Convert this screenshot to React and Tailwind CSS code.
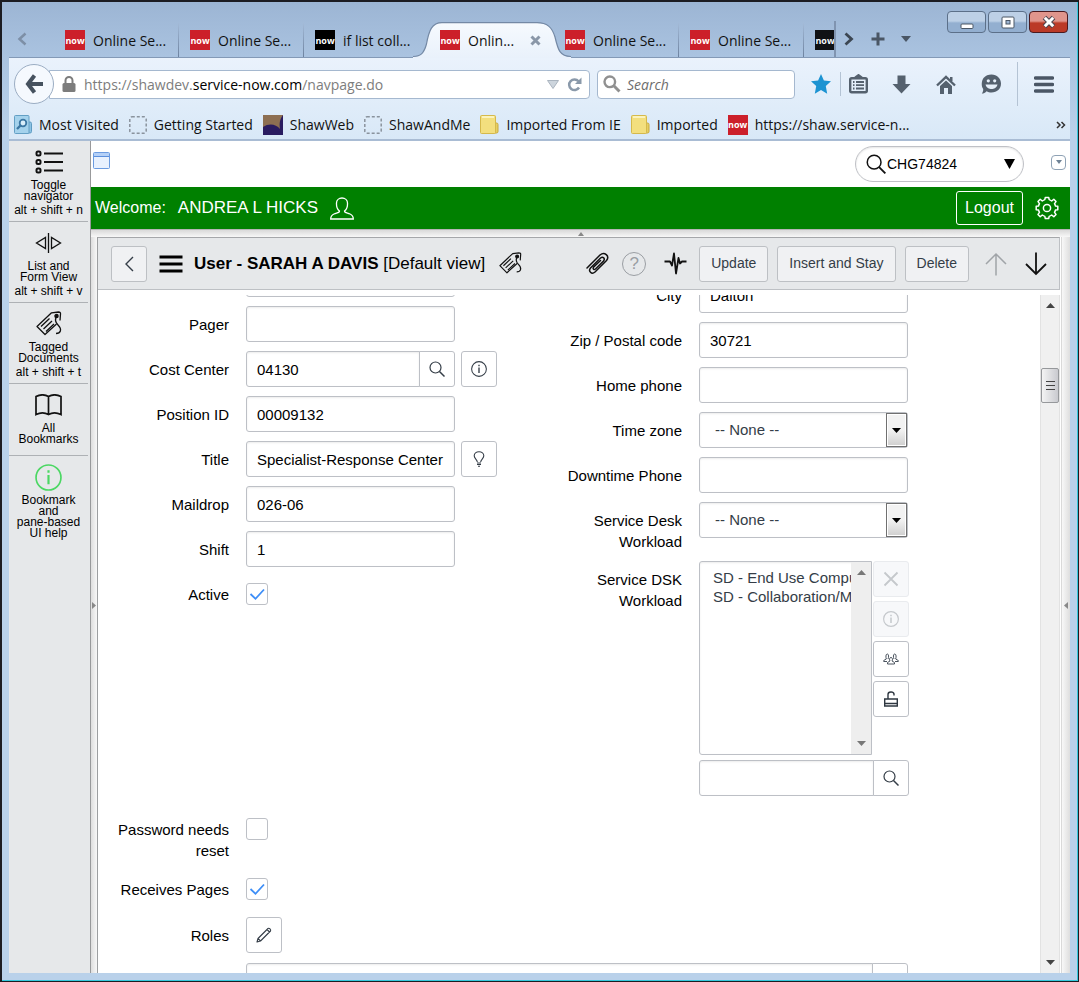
import React from "react";

const ui = "font-['Open_Sans','Noto_Sans',sans-serif]";

function NowIcon({ dark, faded }) {
  return (
    <span
      className={
        "flex h-5 w-5 shrink-0 items-center justify-center overflow-hidden text-[9px] leading-none font-bold text-white " +
        (dark ? "bg-black" : "bg-[#cc1f2a]") +
        (faded ? " opacity-90" : "")
      }
    >
      now
    </span>
  );
}

function Tab({ title, dark, active, line }) {
  if (active) {
    return (
      <div className="relative z-10 flex h-9 w-[125px] shrink-0 items-center pt-0.5 pl-[11px]">
        <svg className="absolute -left-4 top-px h-9 w-[158px]" viewBox="0 0 158 36" aria-hidden="true">
          <defs>
            <linearGradient id="tabfill" x1="0" y1="0" x2="0" y2="1">
              <stop offset="0" stopColor="#f6fafe" />
              <stop offset="1" stopColor="#e9f1fb" />
            </linearGradient>
          </defs>
          <path d="M0 35 C8 35 11 31 13.500 22 C16 8 19 1 29 1 H124 C134 1 139 5 142 15 C145 28 147 35 158 35 V36 H0 Z" fill="url(#tabfill)" />
          <path d="M0 34.500 C8 34.500 11 31 13.500 22 C16 8 19 .7 29 .7 H124 C134 .7 139 5 142 15 C145 28 147 34.500 158 34.500" fill="none" stroke="#7489a5" strokeWidth="1.200" />
        </svg>
        <span className="relative"><NowIcon /></span>
        <a href="#tab" className="relative ml-2 w-[60px] text-[#111]">{title}</a>
        <button aria-label="Close tab" className="relative ml-0.5">
          <svg width="11" height="11" viewBox="0 0 11 11" aria-hidden="true">
            <path d="M1.500 1.500 L9.500 9.500 M9.500 1.500 L1.500 9.500" stroke="#8a97a8" strokeWidth="3" />
          </svg>
        </button>
      </div>
    );
  }
  return (
    <div className="flex h-9 w-[125px] shrink-0 items-center pt-0.5 pl-[11px]">
      <NowIcon dark={dark} />
      <a href="#tab" className="ml-2 flex-1 whitespace-nowrap text-[#111]">{title}</a>
      {line && <span className="h-[34px] w-px bg-gradient-to-b from-[#a3bad7] to-[#6d829f]" />}
    </div>
  );
}

function TitleBar() {
  return (
    <div className="relative flex h-[56px] items-end border-b border-[#8399b6]">
      <div className="flex min-w-0 flex-1 items-center">
        <button aria-label="Scroll tabs left" className="flex h-9 w-[45px] shrink-0 items-center pl-2">
          <svg width="10" height="14" viewBox="0 0 10 14" aria-hidden="true">
            <path d="M8.500 1.500 L2.500 7 L8.500 12.500" fill="none" stroke="#7d8fa6" strokeWidth="2.500" />
          </svg>
        </button>
        <Tab title="Online Se..." line />
        <Tab title="Online Se..." line />
        <Tab title="if list coll..." dark />
        <Tab title="Onlin..." active />
        <Tab title="Online Se..." line />
        <Tab title="Online Se..." line />
        <div className="flex h-9 w-8 shrink-0 items-center overflow-hidden border-r-2 border-[#8094b0] pt-0.5 pl-[11px]">
          <NowIcon dark faded />
        </div>
        <button aria-label="Scroll tabs right" className="ml-2">
          <svg width="10" height="14" viewBox="0 0 10 14" aria-hidden="true">
            <path d="M1.500 1.500 L7.500 7 L1.500 12.500" fill="none" stroke="#3c4652" strokeWidth="2.800" />
          </svg>
        </button>
        <button aria-label="New tab" className="ml-[17px]">
          <svg width="14" height="14" viewBox="0 0 14 14" aria-hidden="true">
            <path d="M7 0.500 V13.500 M0.500 7 H13.500" stroke="#4a5665" strokeWidth="3" />
          </svg>
        </button>
        <button aria-label="List all tabs" className="ml-4">
          <svg width="10" height="6" viewBox="0 0 10 6" aria-hidden="true">
            <path d="M0 0 H10 L5 6 Z" fill="#4a5665" />
          </svg>
        </button>
      </div>
      <div className="absolute right-0.5 top-[9px] flex gap-0.5">
        <button aria-label="Minimize" className="flex h-[22px] w-[39px] items-center justify-center rounded-sm border border-[#5c7089] bg-gradient-to-b from-[#bdd0e6] from-45% to-[#93afd0] to-55%">
          <svg width="14" height="16" viewBox="0 0 14 16" aria-hidden="true">
            <rect x="1" y="10" width="12" height="4.500" rx="1" fill="#fff" stroke="#4a5665" />
          </svg>
        </button>
        <button aria-label="Maximize" className="flex h-[22px] w-[39px] items-center justify-center rounded-sm border border-[#5c7089] bg-gradient-to-b from-[#bdd0e6] from-45% to-[#93afd0] to-55%">
          <svg width="14" height="13" viewBox="0 0 14 13" aria-hidden="true">
            <rect x="1" y="1" width="12" height="11" rx="1" fill="#fff" stroke="#4a5665" />
            <rect x="5" y="4.500" width="4" height="3.500" fill="#9db5d3" stroke="#4a5665" />
          </svg>
        </button>
        <button aria-label="Close" className="flex h-[22px] w-[39px] items-center justify-center rounded-sm border border-[#4a1a1f] bg-gradient-to-b from-[#e0958c] from-45% to-[#bb3a27] to-55%">
          <svg width="14" height="14" viewBox="0 0 14 14" aria-hidden="true">
            <path d="M2.500 2.500 L11.500 11.500 M11.500 2.500 L2.500 11.500" stroke="#4a4550" strokeWidth="5" />
            <path d="M2.800 2.800 L11.200 11.200 M11.200 2.800 L2.800 11.200" stroke="#fff" strokeWidth="3" />
          </svg>
        </button>
      </div>
    </div>
  );
}

function Toolbar() {
  return (
    <div className="flex h-[52px] items-center pl-[5px]">
      <button aria-label="Back" className="z-10 flex h-10 w-10 shrink-0 items-center justify-center rounded-full border border-[#9badc3] bg-[#f5f9fe]">
        <svg width="19" height="20" viewBox="0 0 19 20" aria-hidden="true">
          <path d="M9.500 1.500 L3 10 L9.500 18.500 M2.500 10 H18" fill="none" stroke="#46525f" strokeWidth="4" />
        </svg>
      </button>
      <div className="-ml-[5px] flex h-[29px] flex-1 items-center rounded-r-sm border border-[#a5b8cf] bg-white pl-3">
        <svg width="14" height="16" viewBox="0 0 14 16" aria-hidden="true">
          <path d="M3.500 8 V4.500 A3.500 3.500 0 0 1 10.500 4.500 V8" fill="none" stroke="#7c7c7c" strokeWidth="2" />
          <rect x="0.500" y="7" width="13" height="9" rx="1.500" fill="#7c7c7c" />
        </svg>
        <p className="ml-2 flex-1 whitespace-nowrap text-[#7d7d7d]">
          https://shawdev.<span className="text-black">service-now.com</span>/navpage.do
        </p>
        <svg width="12" height="9" viewBox="0 0 12 9" aria-hidden="true">
          <path d="M0.500 0.500 H11.500 L6 8.500 Z" fill="#cdd5dd" stroke="#aab4bf" />
        </svg>
        <button aria-label="Reload" className="ml-2 mr-[7px]">
          <svg width="15" height="15" viewBox="0 0 15 15" aria-hidden="true">
            <path d="M11.500 4.300 A5.300 5.300 0 1 0 12 10.500" fill="none" stroke="#8a99aa" strokeWidth="2.500" />
            <path d="M14.500 0.500 V7 H8 Z" fill="#8a99aa" />
          </svg>
        </button>
      </div>
      <div className="ml-[7px] flex h-[29px] w-[198px] items-center rounded-sm border border-[#a5b8cf] bg-white pl-[5px]">
        <svg className="shrink-0" width="18" height="18" viewBox="0 0 18 18" aria-hidden="true">
          <circle cx="6.800" cy="6.800" r="5.300" fill="none" stroke="#909090" strokeWidth="2.400" />
          <path d="M10.800 10.800 L16.500 16.500" stroke="#909090" strokeWidth="3" />
        </svg>
        <input aria-label="Search the web" placeholder="Search" className="ml-1.5 w-full min-w-0 bg-transparent outline-none placeholder:text-[#6d6d6d] placeholder:italic" />
      </div>
      <button aria-label="Bookmark this page" className="ml-4">
        <svg width="20" height="20" viewBox="0 0 20 20" aria-hidden="true">
          <path d="M10 0 L12.900 6.400 L20 7.300 L14.800 12.100 L16.200 19.800 L10 16 L3.800 19.800 L5.200 12.100 L0 7.300 L7.100 6.400 Z" fill="#1c93d2" />
        </svg>
      </button>
      <span className="ml-[9px] h-6 w-px bg-[#b4c3d4]" />
      <button aria-label="Show bookmarks" className="ml-2">
        <svg width="19" height="20" viewBox="0 0 19 20" aria-hidden="true">
          <path d="M6 3.500 L9.500 1 L13 3.500" fill="#55616e" stroke="#55616e" strokeWidth="2" />
          <rect x="1.200" y="4.200" width="16.600" height="14" rx="1.500" fill="none" stroke="#55616e" strokeWidth="2.400" />
          <path d="M4 8 H5.500 M7 8 H15 M4 11.200 H5.500 M7 11.200 H15 M4 14.500 H5.500 M7 14.500 H15" stroke="#55616e" strokeWidth="1.800" />
        </svg>
      </button>
      <button aria-label="Downloads" className="ml-6">
        <svg width="19" height="19" viewBox="0 0 19 19" aria-hidden="true">
          <path d="M5.500 0.500 H13.500 V9 H18.500 L9.500 18.500 L0.500 9 H5.500 Z" fill="#55616e" />
        </svg>
      </button>
      <button aria-label="Home" className="ml-[25px]">
        <svg width="20" height="19" viewBox="0 0 20 19" aria-hidden="true">
          <path d="M1 10.500 L10 2 L19 10.500" fill="none" stroke="#55616e" strokeWidth="2.400" />
          <path d="M14 2 H16.500 V6 H14 Z M4 11 L10 5.500 L16 11 V19 H12 V13 H8 V19 H4 Z" fill="#55616e" />
        </svg>
      </button>
      <button aria-label="Start a conversation" className="ml-[25px]">
        <svg width="21" height="20" viewBox="0 0 21 20" aria-hidden="true">
          <path d="M10.500 0.500 C16 0.500 20 4.500 20 9.500 C20 15 16 18.500 10.500 18.500 C8.500 18.500 7 18 5.500 17.200 C4.500 18.800 2.500 19.500 0.800 19.500 C2 18 2.300 16.500 2.200 15 C0 12 0.500 7 2.500 4 C4.500 1.500 7.500 0.500 10.500 0.500 Z" fill="#55616e" />
          <circle cx="7.300" cy="6.800" r="1.600" fill="#e6eff9" />
          <circle cx="13.700" cy="6.800" r="1.600" fill="#e6eff9" />
          <path d="M4.500 10.500 H16.500 C15.500 14 13 15 10.500 15 C8 15 5.500 14 4.500 10.500 Z" fill="#e6eff9" />
        </svg>
      </button>
      <span className="ml-[15px] h-11 w-px bg-[#b4c3d4]" />
      <button aria-label="Open menu" className="ml-4 mr-4">
        <svg width="20" height="17" viewBox="0 0 20 17" aria-hidden="true">
          <path d="M1.500 2 H18.500 M1.500 8.500 H18.500 M1.500 15 H18.500" stroke="#4a5665" strokeWidth="3.400" strokeLinecap="round" />
        </svg>
      </button>
    </div>
  );
}

const Folder = () => (
  <svg width="19" height="20" viewBox="0 0 19 20" aria-hidden="true">
    <rect x="13" y="8" width="5" height="10" rx="1.500" fill="#e6cf62" stroke="#c9a93c" />
    <rect x="0.500" y="0.500" width="15" height="18" rx="1" fill="#f3df7e" stroke="#d5b94c" />
    <path d="M2 2 H14" stroke="#fbf3bd" strokeWidth="2" />
  </svg>
);

const Dashed = () => (
  <svg width="18" height="18" viewBox="0 0 18 18" aria-hidden="true">
    <rect x="0.800" y="0.800" width="16.400" height="16.400" rx="2" fill="none" stroke="#8a939d" strokeWidth="1.500" strokeDasharray="3 2" />
  </svg>
);

function Bookmark({ icon, children }) {
  return (
    <a href="#bookmark" className="flex items-center gap-[7px] whitespace-nowrap text-[#111]">
      {icon}
      {children}
    </a>
  );
}

function Bookmarks() {
  return (
    <div className="flex h-[31px] items-center gap-2.5 border-b-2 border-[#a9bcd4] pl-[5px]">
      <Bookmark
        icon={
          <svg width="18" height="20" viewBox="0 0 18 20" aria-hidden="true">
            <rect x="12" y="7" width="5.500" height="11" rx="1.500" fill="#8cc3e4" stroke="#5f9cc2" />
            <rect x="0.500" y="0.500" width="14.500" height="18" rx="1" fill="#a4d2ec" stroke="#639fc4" />
            <circle cx="9" cy="8" r="3.300" fill="#d9eefa" stroke="#3b77a3" strokeWidth="1.800" />
            <path d="M6.500 10.500 L3 14" stroke="#3b77a3" strokeWidth="2.400" />
          </svg>
        }
      >
        Most Visited
      </Bookmark>
      <Bookmark icon={<Dashed />}>Getting Started</Bookmark>
      <Bookmark
        icon={
          <svg width="20" height="20" viewBox="0 0 20 20" aria-hidden="true">
            <rect width="20" height="20" fill="#2a1c60" />
            <path d="M0 0 H20 C17 4 16 8 17 14 C13 9 6 8 0 12 Z" fill="#8d6f52" />
          </svg>
        }
      >
        ShawWeb
      </Bookmark>
      <Bookmark icon={<Dashed />}>ShawAndMe</Bookmark>
      <Bookmark icon={<Folder />}>Imported From IE</Bookmark>
      <Bookmark icon={<Folder />}>Imported</Bookmark>
      <Bookmark icon={<NowIcon />}>https://shaw.service-n...</Bookmark>
      <button aria-label="More bookmarks" className="ml-auto mr-1">
        <svg width="10" height="8" viewBox="0 0 10 8" aria-hidden="true">
          <path d="M1 1 L4 4 L1 7 M5.500 1 L8.500 4 L5.500 7" fill="none" stroke="#333" strokeWidth="1.500" />
        </svg>
      </button>
    </div>
  );
}

function TagIcon({ size }) {
  return (
    <svg width={size} height={size} viewBox="0 0 26 26" fill="none" stroke="#111" strokeWidth="1.300" strokeLinejoin="round" aria-hidden="true">
      <path d="M20.500 13 L9 23.500 L1 15.500 L15.500 1.800 L22.500 1 C24 1 24.700 1.500 24.500 3 L24 9.500" />
      <path d="M5 15.500 L13.500 7.500 M7.500 18 L16 10 M10 20.500 L18 13" />
      <circle cx="20.500" cy="5" r="1.600" fill="#111" />
      <path d="M20.500 5.500 C18.500 9 19.500 11.500 22 14 C26.500 18.500 24.500 22.500 20 22.500" />
    </svg>
  );
}

function InfoIcon({ size, color, width }) {
  return (
    <svg width={size} height={size} viewBox="0 0 26 26" fill="none" stroke={color} strokeWidth={width} aria-hidden="true">
      <circle cx="13" cy="13" r="12" />
      <path d="M13 10.500 V19.500 M13 6 V8.500" strokeWidth={width * 1.3} />
    </svg>
  );
}

function SideItem({ icon, lines, keys, last }) {
  return (
    <button className={"mr-0.5 flex flex-col items-center pt-[9px] pb-[3px] text-[12px] leading-[11px] text-black " + (last ? "" : "border-b border-[#aeb1b5]")}>
      <span className="mb-1.5 flex h-6 items-center">{icon}</span>
      {lines.map((l) => (
        <span key={l} className="whitespace-nowrap">{l}</span>
      ))}
      {keys ? <span className="leading-4 whitespace-nowrap">{keys}</span> : <span className="h-[7px]" />}
    </button>
  );
}

function Sidebar() {
  return (
    <nav className="flex w-[82px] shrink-0 flex-col border-r border-[#98999b] bg-[#e6e8ea]">
      <SideItem
        lines={["Toggle", "navigator"]}
        keys="alt + shift + n"
        icon={
          <svg width="28" height="24" viewBox="0 0 28 24" fill="none" stroke="#111" strokeWidth="2" aria-hidden="true">
            <rect x="1.500" y="1.500" width="4" height="4" rx="1.500" />
            <rect x="1.500" y="10" width="4" height="4" rx="1.500" />
            <rect x="1.500" y="18.500" width="4" height="4" rx="1.500" />
            <path d="M9 3.500 H28 M9 12 H28 M9 20.500 H28" />
          </svg>
        }
      />
      <SideItem
        lines={["List and", "Form View"]}
        keys="alt + shift + v"
        icon={
          <svg width="27" height="20" viewBox="0 0 27 20" fill="none" stroke="#111" strokeWidth="1.300" aria-hidden="true">
            <path d="M13.500 0 V20 M10.500 4.500 V15.500 L1.500 10 Z M16.500 4.500 V15.500 L25.500 10 Z" />
          </svg>
        }
      />
      <SideItem lines={["Tagged", "Documents"]} keys="alt + shift + t" icon={<TagIcon size={26} />} />
      <SideItem
        lines={["All", "Bookmarks"]}
        icon={
          <svg width="27" height="22" viewBox="0 0 27 22" fill="none" stroke="#111" strokeWidth="1.700" aria-hidden="true">
            <path d="M13.500 2.500 C10 0.500 5 0.500 1 2.500 V20.500 C5 18.500 10 18.500 13.500 20.500 C17 18.500 22 18.500 26 20.500 V2.500 C22 0.500 17 0.500 13.500 2.500 Z M13.500 2.500 V20.500" />
          </svg>
        }
      />
      <SideItem last lines={["Bookmark", "and", "pane-based", "UI help"]} icon={<InfoIcon size={27} color="#4bd763" width={1.6} />} />
    </nav>
  );
}

function Lens({ size, color }) {
  return (
    <svg width={size} height={size} viewBox="0 0 16 16" fill="none" stroke={color} strokeWidth="1.200" className="shrink-0" aria-hidden="true">
      <circle cx="6.500" cy="6.500" r="5.500" />
      <path d="M10.500 10.500 L15.500 15.500" strokeWidth="1.500" />
    </svg>
  );
}

function Banner() {
  return (
    <>
      <div className="flex h-[46px] shrink-0 items-center bg-white pl-0.5 pr-1">
        <button aria-label="Open pane" className="mb-2">
          <svg width="17" height="17" viewBox="0 0 17 17" aria-hidden="true">
            <rect x="0.500" y="0.500" width="16" height="16" rx="1" fill="#e8f1fe" stroke="#6b9be0" />
            <path d="M1 1 H16 V4 H1 Z" fill="#b4d0f7" />
            <path d="M1 4.500 H16" stroke="#5b8fdc" />
          </svg>
        </button>
        <div className="ml-auto flex h-9 w-[169px] items-center rounded-full border border-[#bfc1c6] pl-2.5 pr-2 shadow-[inset_0_1px_2px_rgba(0,0,0,0.1)]">
          <Lens size={20} color="#111" />
          <input aria-label="Global search" defaultValue="CHG74824" className="ml-px w-full min-w-0 bg-transparent text-[14px] text-black outline-none" />
          <svg className="shrink-0" width="11" height="10" viewBox="0 0 11 10" aria-hidden="true">
            <path d="M0 0 H11 L5.500 10 Z" fill="#000" />
          </svg>
        </div>
        <button aria-label="More options" className="mb-1 ml-[27px] flex h-[15px] w-[15px] items-center justify-center rounded-sm border border-[#8fa2b5]">
          <svg width="6" height="4" viewBox="0 0 6 4" aria-hidden="true"><path d="M0 0 H6 L3 4 Z" fill="#6e8295" /></svg>
        </button>
      </div>
      <div className="flex h-[42px] shrink-0 items-center bg-[#008000] pl-1 pr-[11px] text-white">
        <span className="text-[16px]">Welcome:</span>
        <span className="ml-3 text-[17px]">ANDREA L HICKS</span>
        <svg className="ml-3" width="24" height="23" viewBox="0 0 24 23" fill="none" stroke="#fff" strokeWidth="1.300" aria-hidden="true">
          <path d="M9.500 14 C6 11.500 6.500 8 6.500 6 C6.500 3 9 1 12 1 C15 1 17.500 3 17.500 6 C17.500 8 18 11.500 14.500 14 C14.500 16 17 15.800 20 17 C22.500 18 23.300 19.500 23.300 22 H0.700 C0.700 19.500 1.500 18 4 17 C7 15.800 9.500 16 9.500 14 Z" />
        </svg>
        <button className="ml-auto h-[34px] rounded-[3px] border border-white px-2 text-[16px]">Logout</button>
        <button aria-label="Settings" className="ml-3">
          <svg width="24" height="24" viewBox="0 0 24 24" fill="none" stroke="#fff" strokeWidth="1.500" strokeLinejoin="round" aria-hidden="true">
            <circle cx="12" cy="12" r="3.600" />
            <path d="M9.800 3.600 L10.300 1.500 H13.700 L14.200 3.600 C15.200 4 16 4.500 16.700 5 L18.800 3.200 L21 5.600 L19.500 7.600 C20 8.500 20.300 9.200 20.500 10 L22.800 10.300 V13.700 L20.500 14 C20.300 14.800 20 15.500 19.500 16.400 L21 18.400 L18.800 20.800 L16.700 19 C16 19.500 15.200 20 14.200 20.400 L13.700 22.500 H10.300 L9.800 20.400 C8.800 20 8 19.500 7.300 19 L5.200 20.800 L3 18.400 L4.500 16.400 C4 15.500 3.700 14.800 3.500 14 L1.200 13.700 V10.300 L3.500 10 C3.700 9.200 4 8.500 4.500 7.600 L3 5.600 L5.200 3.200 L7.300 5 C8 4.500 8.800 4 9.800 3.600 Z" />
          </svg>
        </button>
      </div>
      <div className="flex h-2 shrink-0 items-center justify-center border-t border-[#b5b5b5] bg-gradient-to-b from-[#d9d9d9] to-[#f8f8f8]">
        <svg width="6" height="4" viewBox="0 0 6 4" aria-hidden="true"><path d="M0 4 H6 L3 0 Z" fill="#888" /></svg>
      </div>
    </>
  );
}

function HeaderButton({ children }) {
  return (
    <button className="h-9 rounded-[3px] border border-[#bdc0c4] bg-[#f0f1f3] px-[11px] text-[14px] whitespace-nowrap text-[#343d47]">
      {children}
    </button>
  );
}

function FormHeader() {
  return (
    <header className="flex h-[53px] shrink-0 items-center border-t border-r border-b border-t-[#a5a7aa] border-r-[#bdc0c4] border-b-[#bdc0c4] bg-[#e6e8ea] pl-[13px] pr-3">
      <button aria-label="Back" className="flex h-9 w-9 shrink-0 items-center justify-center rounded-[3px] border border-[#bdc0c4] bg-[#f0f1f3]">
        <svg width="9" height="16" viewBox="0 0 9 16" aria-hidden="true"><path d="M8 1 L1 8 L8 15" fill="none" stroke="#343d47" strokeWidth="1.400" /></svg>
      </button>
      <button aria-label="Form menu" className="ml-3">
        <svg width="24" height="18" viewBox="0 0 24 18" aria-hidden="true"><path d="M0.500 2 H23.500 M0.500 9 H23.500 M0.500 16 H23.500" stroke="#000" strokeWidth="3" /></svg>
      </button>
      <h1 className="ml-[11px] text-[17px] whitespace-nowrap text-black">
        <span className="font-bold">User - SARAH A DAVIS</span> [Default view]
      </h1>
      <button aria-label="Tags" className="ml-3.5"><TagIcon size={23} /></button>
      <div className="ml-auto flex items-center">
        <button aria-label="Attachments">
          <svg width="23" height="23" viewBox="0 0 23 23" fill="none" stroke="#111" strokeWidth="1.500" strokeLinecap="round" aria-hidden="true">
            <path d="M1 16 L14 3 C18.500 -0.800 24 4 20.500 8.500 L9 20 C5.500 23 2 19 4.500 16 L14.500 6 C17 4.200 19.500 6.500 17.500 9 L9.500 17 C8 18 6.500 16.800 7.500 15.300 L14.500 8.500" />
          </svg>
        </button>
        <button aria-label="Help" className="ml-[13px] flex h-6 w-6 items-center justify-center rounded-full border border-[#9a9ea3] text-[17px] text-[#9a9ea3]">?</button>
        <button aria-label="Activity" className="ml-[18px] mr-3">
          <svg width="23" height="23" viewBox="0 0 23 23" fill="none" stroke="#111" strokeWidth="1.800" strokeLinejoin="round" aria-hidden="true">
            <path d="M0.500 9.500 H6 L8 13.500 L10 1.500 L12 21.500 L14.500 6 L16 11.500 L18 9.500 H22.500" />
          </svg>
        </button>
        <div className="flex gap-[9px]">
          <HeaderButton>Update</HeaderButton>
          <HeaderButton>Insert and Stay</HeaderButton>
          <HeaderButton>Delete</HeaderButton>
        </div>
        <button aria-label="Previous record" className="ml-4">
          <svg width="22" height="24" viewBox="0 0 22 24" aria-hidden="true"><path d="M11 23.500 V2 M1 12 L11 2 L21 12" fill="none" stroke="#a0a4a8" strokeWidth="1.500" /></svg>
        </button>
        <button aria-label="Next record" className="ml-[18px]">
          <svg width="22" height="24" viewBox="0 0 22 24" aria-hidden="true"><path d="M11 0.500 V22 M1 12 L11 22 L21 12" fill="none" stroke="#111" strokeWidth="1.800" /></svg>
        </button>
      </div>
    </header>
  );
}

function Row({ label, id, children, side }) {
  return (
    <div className="flex gap-[17px]">
      <label htmlFor={id} className="w-[131px] shrink-0 pt-2 pl-4 text-right leading-[21px] text-black">{label}</label>
      <div className="min-w-0 flex-1">{children}</div>
      <div className="-ml-[11px] w-[90px] shrink-0">{side}</div>
    </div>
  );
}

const box = "border-[#bdc0c6] bg-white shadow-[inset_0_1px_2px_rgba(0,0,0,0.08)] outline-none";

function TextInput({ id, value = "", joined, label }) {
  return (
    <input
      id={id}
      aria-label={label}
      defaultValue={value}
      className={"block h-9 w-full min-w-0 border px-2.5 text-black " + box + (joined ? " rounded-l-[3px]" : " rounded-[3px]")}
    />
  );
}

function IconButton({ label, joined, disabled, children }) {
  return (
    <button
      type="button"
      aria-label={label}
      disabled={disabled}
      className={
        "flex h-9 w-9 shrink-0 items-center justify-center border " +
        (joined ? "-ml-px rounded-r-[3px] " : "rounded-[3px] ") +
        (disabled ? "border-[#e9ebee] bg-[#f7f8fa]" : "border-[#bdc0c6] bg-white")
      }
    >
      {children}
    </button>
  );
}

function SelectBox({ id }) {
  return (
    <div className={"relative flex h-9 rounded-[3px] border " + box}>
      <select id={id} className="w-full appearance-none bg-transparent pl-[15px] text-[#343d47] outline-none">
        <option>-- None --</option>
      </select>
      <span className="pointer-events-none absolute inset-y-0 right-0 flex w-[21px] items-center justify-center border border-[#707070] bg-gradient-to-b from-[#f2f2f2] from-50% to-[#cfcfcf] ring-1 ring-white ring-inset">
        <svg width="9" height="5" viewBox="0 0 9 5" aria-hidden="true"><path d="M0 0 H9 L4.500 5 Z" fill="#000" /></svg>
      </span>
    </div>
  );
}

function Check({ id, checked }) {
  return (
    <div className="flex h-9 items-center">
      <span className="relative flex h-[22px] w-[22px]">
        <input id={id} type="checkbox" defaultChecked={checked} className="peer h-full w-full appearance-none rounded-[3px] border border-[#bdc0c6] bg-white" />
        <svg className="pointer-events-none absolute inset-0 hidden peer-checked:block" width="22" height="22" viewBox="0 0 22 22" aria-hidden="true">
          <path d="M4.500 11 L9.500 15.800 L18 6.500" fill="none" stroke="#3e8ef7" strokeWidth="1.800" />
        </svg>
      </span>
    </div>
  );
}

function ListBox() {
  return (
    <div className="-mr-px flex flex-col gap-[5px]">
      <div className="flex gap-px">
        <div className={"flex h-[194px] min-w-0 flex-1 rounded-l-[3px] border " + box}>
          <select id="dsk" multiple className="h-full min-w-0 flex-1 appearance-none overflow-hidden bg-transparent pt-[7px] pl-[13px] leading-[19px] text-[#343d47] outline-none">
            <option className="h-[19px] min-h-0 py-0 leading-[19px]">SD - End Use Computing</option>
            <option className="h-[19px] min-h-0 py-0 leading-[19px]">SD - Collaboration/Messaging</option>
          </select>
          <div className="flex w-5 shrink-0 flex-col items-center justify-between bg-[#eeeeee] py-2">
            <svg width="9" height="5" viewBox="0 0 9 5" aria-hidden="true"><path d="M0 5 H9 L4.500 0 Z" fill="#777" /></svg>
            <svg width="9" height="5" viewBox="0 0 9 5" aria-hidden="true"><path d="M0 0 H9 L4.500 5 Z" fill="#777" /></svg>
          </div>
        </div>
        <div className="flex flex-col gap-1">
          <IconButton label="Remove" disabled>
            <svg width="16" height="16" viewBox="0 0 16 16" aria-hidden="true"><path d="M1.500 1.500 L14.500 14.500 M14.500 1.500 L1.500 14.500" stroke="#c5c8cc" strokeWidth="1.800" /></svg>
          </IconButton>
          <IconButton label="View selected" disabled><InfoIcon size={16} color="#c5c8cc" width={1.9} /></IconButton>
          <IconButton label="Add group">
            <svg width="16" height="12" viewBox="0 0 16 12" fill="none" stroke="#4a535e" aria-hidden="true">
              <path d="M5 6 C5.800 4.500 6 1 4.300 1 C2.500 1 2.800 4.500 3.300 6 L0.700 7.500 V8.500 H4 M11 6 C10.200 4.500 10 1 11.700 1 C13.500 1 13.200 4.500 12.700 6 L15.300 7.500 V8.500 H12 M4.500 11 V9.500 L7 8 C6 6.500 6.500 4.500 8 4.500 C9.500 4.500 10 6.500 9 8 L11.500 9.500 V11 Z" />
            </svg>
          </IconButton>
          <IconButton label="Unlock">
            <svg width="14" height="16" viewBox="0 0 14 16" fill="none" stroke="#2e3740" strokeWidth="1.400" aria-hidden="true">
              <path d="M4 8 V3.500 C4 0.300 9.500 0.300 10 3 V4.500 M0.700 8 H13.300 V15 H0.700 Z M1 12.500 H13" />
            </svg>
          </IconButton>
        </div>
      </div>
      <div className="flex">
        <TextInput joined label="Add Service DSK Workload" />
        <IconButton label="Look up workload" joined><Lens size={16} color="#343d47" /></IconButton>
      </div>
    </div>
  );
}

function Form() {
  return (
    <form className="min-w-0 flex-1 overflow-hidden bg-white pr-9">
      <div className="-mt-[34px] grid grid-cols-2">
        <div className="flex flex-col gap-[9px]">
          <Row label="" id="fax"><TextInput id="fax" label="Fax" /></Row>
          <Row label="Pager" id="pager"><TextInput id="pager" /></Row>
          <Row
            label="Cost Center"
            id="cost"
            side={<IconButton label="Cost center details"><InfoIcon size={16} color="#343d47" width={1.7} /></IconButton>}
          >
            <div className="flex">
              <TextInput id="cost" value="04130" joined />
              <IconButton label="Look up cost center" joined><Lens size={16} color="#343d47" /></IconButton>
            </div>
          </Row>
          <Row label="Position ID" id="position"><TextInput id="position" value="00009132" /></Row>
          <Row
            label="Title"
            id="title"
            side={
              <IconButton label="Title suggestions">
                <svg width="12" height="16" viewBox="0 0 12 16" fill="none" stroke="#343d47" strokeWidth="1.100" aria-hidden="true">
                  <path d="M4.300 11 C4.300 8.500 1.200 7.500 1.200 4.800 C1.200 2.500 3.300 0.700 6 0.700 C8.700 0.700 10.800 2.500 10.800 4.800 C10.800 7.500 7.700 8.500 7.700 11 M4 12 H8 M4 13.500 H8 M5 15.300 H7" />
                </svg>
              </IconButton>
            }
          >
            <TextInput id="title" value="Specialist-Response Center" />
          </Row>
          <Row label="Maildrop" id="maildrop"><TextInput id="maildrop" value="026-06" /></Row>
          <Row label="Shift" id="shift"><TextInput id="shift" value="1" /></Row>
          <Row label="Active" id="active"><Check id="active" checked /></Row>
        </div>
        <div className="flex flex-col gap-[9px] pt-4">
          <Row label="City" id="city"><TextInput id="city" value="Dalton" /></Row>
          <Row label="Zip / Postal code" id="zip"><TextInput id="zip" value="30721" /></Row>
          <Row label="Home phone" id="home"><TextInput id="home" /></Row>
          <Row label="Time zone" id="tz"><SelectBox id="tz" /></Row>
          <Row label="Downtime Phone" id="down"><TextInput id="down" /></Row>
          <Row label="Service Desk Workload" id="sdw"><SelectBox id="sdw" /></Row>
          <Row label="Service DSK Workload" id="dsk"><ListBox /></Row>
        </div>
      </div>
      <div className="mt-[15px] flex flex-col gap-2.5">
        <Row label="Password needs reset" id="reset"><Check id="reset" /></Row>
        <Row label="Receives Pages" id="pages"><Check id="pages" checked /></Row>
        <Row label="Roles" id="roles">
          <button id="roles" type="button" aria-label="Edit roles" className="flex h-9 w-9 items-center justify-center rounded-[3px] border border-[#bdc0c6] bg-white">
            <svg width="16" height="16" viewBox="0 0 16 16" fill="none" stroke="#343d47" strokeWidth="1.100" strokeLinejoin="round" aria-hidden="true">
              <path d="M1 15 L2 11.500 L12 1.500 C13.200 0.600 15.300 2.700 14.500 4 L4.500 14 Z M11 2.500 L13.500 5 M2 11.500 L4.500 14" />
            </svg>
          </button>
        </Row>
        <Row label="" id="notes">
          <div className="flex">
            <TextInput id="notes" joined label="Additional field" />
            <IconButton label="Look up" joined />
          </div>
        </Row>
      </div>
    </form>
  );
}

function ScrollTrack() {
  return (
    <div className="flex w-5 shrink-0 flex-col items-center border-r border-l border-[#e2e2e2] bg-[#f0f0f0] py-2">
      <svg className="shrink-0" width="9" height="5" viewBox="0 0 9 5" aria-hidden="true"><path d="M0 5 H9 L4.500 0 Z" fill="#444" /></svg>
      <div className="mt-[60px] flex h-[35px] w-[18px] shrink-0 flex-col items-center justify-center gap-[3px] rounded-xs border border-[#96989b] bg-gradient-to-r from-[#f4f4f4] to-[#c9cacf]">
        <span className="h-px w-[9px] bg-[#444]" />
        <span className="h-px w-[9px] bg-[#444]" />
        <span className="h-px w-[9px] bg-[#444]" />
      </div>
      <svg className="mt-auto shrink-0" width="9" height="5" viewBox="0 0 9 5" aria-hidden="true"><path d="M0 0 H9 L4.500 5 Z" fill="#444" /></svg>
    </div>
  );
}

export default function App() {
  return (
    <div className="flex h-screen flex-col overflow-hidden border-t-2 border-r border-b border-l-2 border-[#1c1c22] bg-[#b9d1ea] font-['Liberation_Sans',Arial,sans-serif] text-[15px]">
      <div className="flex min-h-0 flex-1 flex-col border-r border-b border-[#35c8dc] bg-[linear-gradient(to_bottom,#9cb5d4,#aac3e0_55px,#b9d1ea_130px)] pr-[7px] pb-[7px] pl-[7px]">
        <div className={"text-[14px] " + ui}>
          <TitleBar />
          <div className="bg-gradient-to-b from-[#eaf2fc] to-[#d8e8f7]">
            <Toolbar />
            <Bookmarks />
          </div>
        </div>
        <div className="flex min-h-0 flex-1">
          <Sidebar />
          <main className="flex min-w-0 flex-1 flex-col bg-white">
            <Banner />
            <div className="flex min-h-0 flex-1">
              <div className="flex w-[7px] shrink-0 items-center justify-center border-r border-[#9d9fa1] bg-gradient-to-r from-[#dedede] to-[#f8f8f8]">
                <svg width="4" height="7" viewBox="0 0 4 7" aria-hidden="true"><path d="M0 0 V7 L4 3.500 Z" fill="#888" /></svg>
              </div>
              <section className="flex min-w-0 flex-1 flex-col">
                <FormHeader />
                <div className="mt-[5px] flex min-h-0 flex-1">
                  <Form />
                  <ScrollTrack />
                </div>
              </section>
              <div className="ml-px flex w-[9px] shrink-0 items-center justify-center border-l border-[#d9d9d9] bg-gradient-to-r from-[#f8f8f8] to-[#dedede]">
                <svg width="4" height="7" viewBox="0 0 4 7" aria-hidden="true"><path d="M4 0 V7 L0 3.500 Z" fill="#888" /></svg>
              </div>
            </div>
          </main>
        </div>
      </div>
    </div>
  );
}
